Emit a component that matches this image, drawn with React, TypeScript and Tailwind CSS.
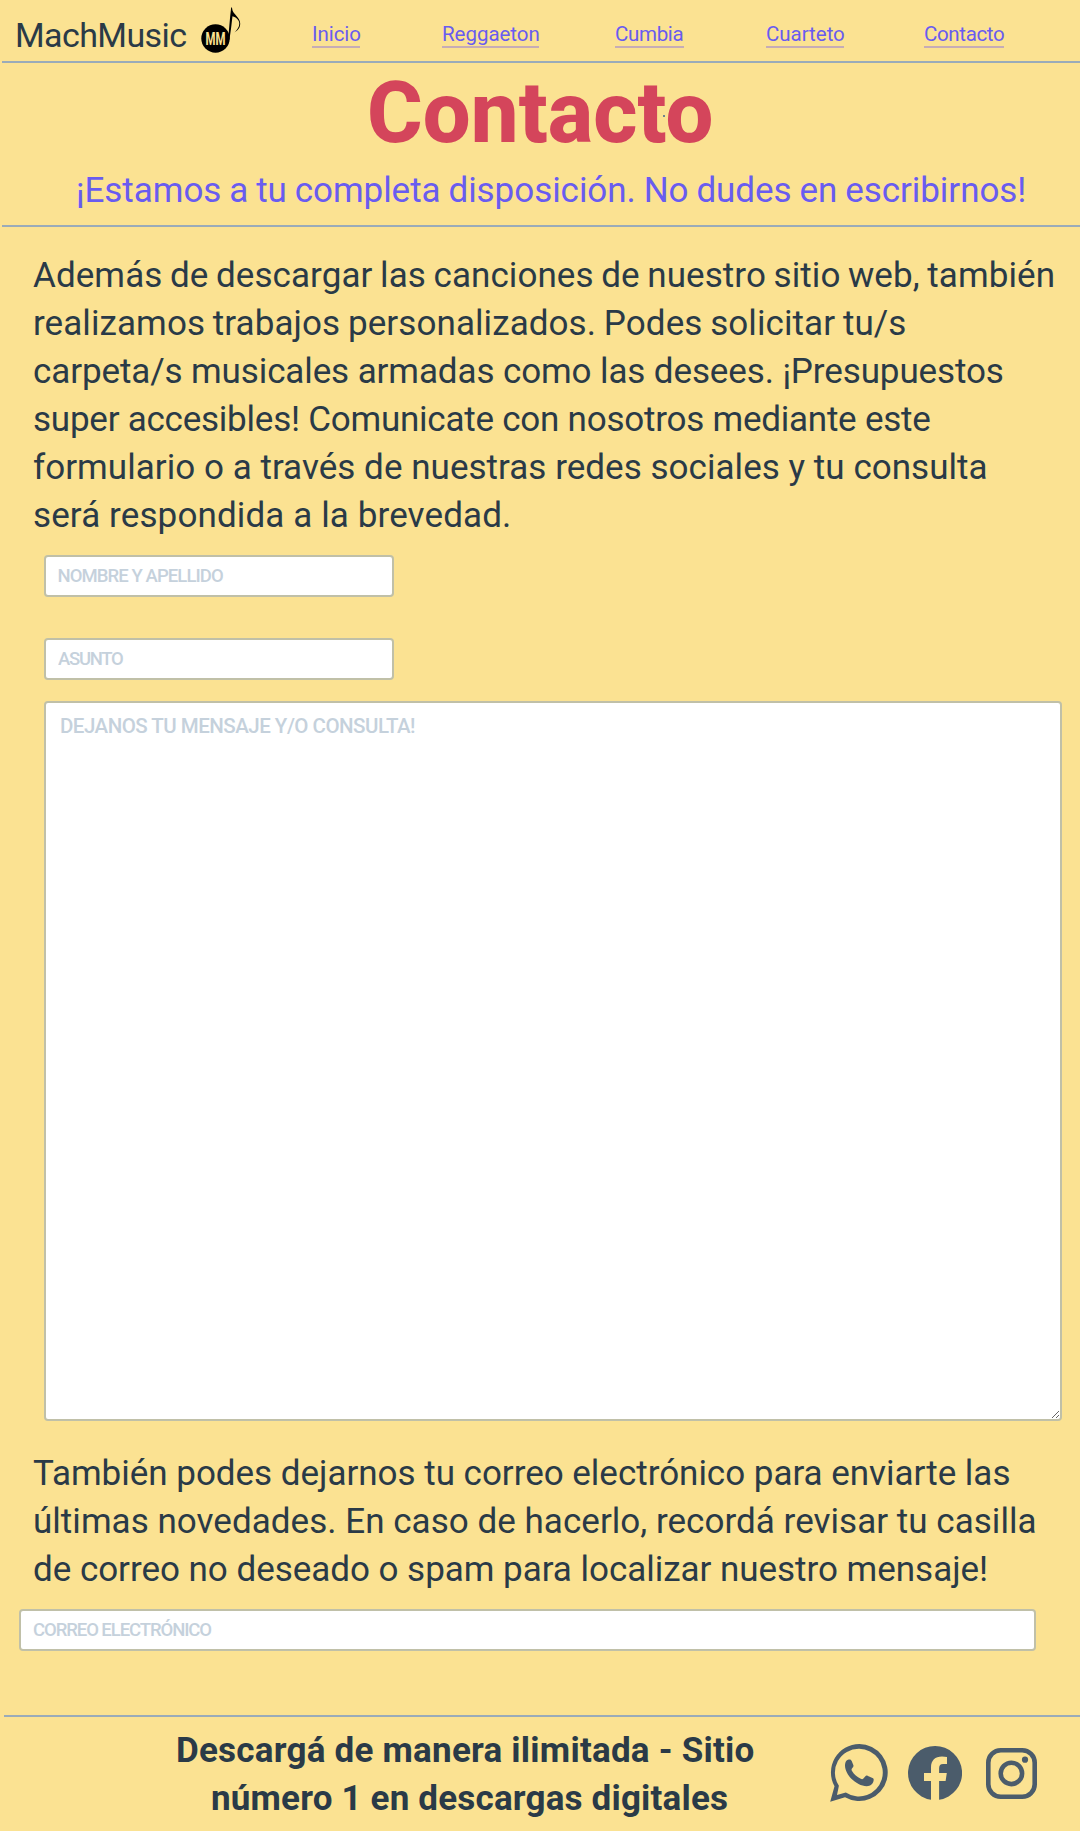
import React from "react";

type Line = { text: string; className: string };

const links: Line[] = [
  { text: "Inicio", className: "ml-[69px] w-[48px] tracking-[-0.08px]" },
  { text: "Reggaeton", className: "ml-[82px] w-[97px] tracking-[-0.03px]" },
  { text: "Cumbia", className: "ml-[76px] w-[69px] tracking-[-0.32px]" },
  { text: "Cuarteto", className: "ml-[82px] w-[78px] tracking-[-0.03px]" },
  { text: "Contacto", className: "ml-[80px] w-[80px] tracking-[-0.35px]" },
];

const intro: Line[] = [
  { text: "Además de descargar las canciones de nuestro sitio web, también", className: "-ml-px tracking-[0.08px] [word-spacing:-1.2px]" },
  { text: "realizamos trabajos personalizados. Podes solicitar tu/s", className: "-ml-px tracking-[0.08px] [word-spacing:-1px]" },
  { text: "carpeta/s musicales armadas como las desees. ¡Presupuestos", className: "-ml-px tracking-[-0.11px]" },
  { text: "super accesibles! Comunicate con nosotros mediante este", className: "-ml-px tracking-[-0.235px]" },
  { text: "formulario o a través de nuestras redes sociales y tu consulta", className: "-ml-px tracking-[0.035px]" },
  { text: "será respondida a la brevedad.", className: "-ml-px tracking-[0.117px]" },
];

const newsletter: Line[] = [
  { text: "También podes dejarnos tu correo electrónico para enviarte las", className: "-ml-px tracking-[-0.02px]" },
  { text: "últimas novedades. En caso de hacerlo, recordá revisar tu casilla", className: "-ml-px tracking-[0.033px]" },
  { text: "de correo no deseado o spam para localizar nuestro mensaje!", className: "-ml-px tracking-[-0.031px]" },
];

const inputBase =
  "block h-[42px] rounded-[4px] border-2 border-[#c0c0a8] bg-white pb-px font-medium text-[18.5px] placeholder:text-[#c5d1dc] placeholder:opacity-100 outline-none";

function Paragraph({ lines }: { lines: Line[] }) {
  return (
    <p className="pl-[34px] text-[35px] leading-[48px]">
      {lines.map((l) => (
        <span key={l.text} className={`block whitespace-nowrap ${l.className}`}>
          {l.text}
        </span>
      ))}
    </p>
  );
}

function NoteLogo() {
  return (
    <svg className="block h-[48px] w-[42px]" viewBox="0 0 42 48" aria-hidden="true">
      <circle cx="14.5" cy="32.5" r="14.2" fill="#000" />
      <path
        d="M30.2 1.3c.7 0 1 .7 1 1.8.3 5 8 8.2 8 14.5 0 4.2-2.3 6.9-5.7 8.9 3-3 4.8-5.5 4.8-8.9 0-3.7-3.2-6.5-6.8-7.4-.8 5.8-1.4 14-3.2 23.8h-1.4c1.5-11 1.8-21.7 3.3-32.7z"
        fill="#000"
      />
      <text
        x="4.6"
        y="39.2"
        textLength="20"
        lengthAdjust="spacingAndGlyphs"
        fill="#fbe292"
        className="font-['Roboto'] text-[19px] font-bold"
      >
        MM
      </text>
    </svg>
  );
}

function WhatsappIcon() {
  return (
    <svg className="block h-[58px] w-[58px]" viewBox="0 0 58 58" fill="#4b5c6b" aria-label="WhatsApp">
      <path
        fillRule="evenodd"
        d="M29.3 0A28.5 28.5 0 1 1 15 53.2L.2 57.7 4.5 42.3A28.5 28.5 0 0 1 29.3 0zM29.3 4.7A23.9 23.9 0 0 0 8.9 41.8L7 50.9 15.8 48.6A23.9 23.9 0 1 0 29.3 4.7z"
      />
      <path d="M15.2 19.5c.4-2.2 1.6-3.7 3.5-4 1.7-.3 2.5.2 3 1.5l1.7 4.3c.4 1.2-.6 2.3-1.4 3.3-.7.8-.5 1.5 0 2.3 2.1 3.4 5 6 8.8 7.9 1.2.6 1.8.5 2.6-.4l2-2.2c.7-.8 1.5-.8 2.5-.3l4.6 2.2c1.2.5 1.3 1.2 1.1 2.5-.5 3.2-2.9 5.6-6.9 5.6-5.3 0-11.2-3.3-15.6-7.7-3.5-3.6-7-9.600-5.900-15z" />
    </svg>
  );
}

function FacebookIcon() {
  return (
    <svg className="block h-[54px] w-[54px]" viewBox="0 0 54 54" fill="#4b5c6b" aria-label="Facebook">
      <path d="M27 0a27 27 0 0 1 4.1 53.7V35h6.5l1.2-8h-7.7v-4.7c0-2.7 1.2-4.2 4-4.2h3.9v-7.2c-1.5-.3-3.2-.5-5-.5-6.9 0-11 3.9-11 11V27h-7v8h7v18.7A27 27 0 0 1 27 0z" />
    </svg>
  );
}

function InstagramIcon() {
  return (
    <svg className="block h-[51px] w-[51px]" viewBox="0 0 51 51" fill="none" stroke="#4b5c6b" aria-label="Instagram">
      <rect x="2.3" y="2.3" width="46.4" height="46.4" rx="12.5" strokeWidth="4.6" />
      <circle cx="25.4" cy="25.4" r="10.7" strokeWidth="4.6" />
      <circle cx="39" cy="11.7" r="3.1" fill="#4b5c6b" stroke="none" />
    </svg>
  );
}

export default function App() {
  return (
    <div className="h-[1831px] w-[1080px] overflow-hidden bg-[#fbe292] font-['Roboto',sans-serif] text-[#2a3a47]">
      <header className="ml-[2px] flex h-[63px] items-start border-b-2 border-[#9aabb9]">
        <span className="ml-[13px] mt-[11px] w-[184px] whitespace-nowrap text-[34px] leading-[48px] tracking-[-0.6px]">
          MachMusic
        </span>
        <span className="ml-[2px] mt-[6px]">
          <NoteLogo />
        </span>
        <nav className="flex pt-[19px]">
          {links.map((l) => (
            <a
              key={l.text}
              href="#"
              className={`block h-[29px] whitespace-nowrap border-b-2 border-[#c6acb6] text-[20.5px] leading-[30px] text-[#695cf0] ${l.className}`}
            >
              {l.text}
            </a>
          ))}
        </nav>
      </header>

      <section className="ml-[2px] h-[164px] border-b-2 border-[#9aabb9]">
        <h1 className="relative h-[104px] whitespace-nowrap pl-[365px] text-[85px] font-extrabold leading-[100px] tracking-[0.1px] text-[#d4455b]">
          Contacto
          <span className="absolute left-[661px] top-[52px] h-[2px] w-[2px] bg-[#6f8590]" />
        </h1>
        <p className="whitespace-nowrap pl-[74px] text-[35px] leading-[48px] tracking-[-0.05px] text-[#695cf0] [word-spacing:-0.7px]">
          ¡Estamos a tu completa disposición. No dudes en escribirnos!
        </p>
      </section>

      <main className="h-[1488px] pt-[25px]">
        <Paragraph lines={intro} />
        <form className="ml-[44px] pt-[15px]">
          <input
            className={`${inputBase} w-[350px] pl-[11.5px] tracking-[-0.915px]`}
            placeholder="NOMBRE Y APELLIDO"
          />
          <input
            className={`${inputBase} mt-[41px] w-[350px] pl-[12px] tracking-[-1.29px]`}
            placeholder="ASUNTO"
          />
          <textarea
            className="mt-[21px] block h-[720px] w-[1018px] resize rounded-[4px] border-2 border-[#c0c0a8] bg-white pl-[14px] pt-[8px] text-[20.5px] font-medium leading-[30px] tracking-[-0.51px] outline-none placeholder:text-[#c5d1dc] placeholder:opacity-100"
            placeholder="DEJANOS TU MENSAJE Y/O CONSULTA!"
          />
        </form>
        <div className="pt-[29px]">
          <Paragraph lines={newsletter} />
        </div>
        <input
          className={`${inputBase} ml-[19px] mt-[15px] w-[1017px] pl-[12px] tracking-[-1.08px]`}
          placeholder="CORREO ELECTRÓNICO"
        />
      </main>

      <footer className="ml-[4px] flex h-[116px] items-start border-t-2 border-[#9aabb9]">
        <p className="ml-[172px] mt-[10px] w-[582px] text-[35px] font-bold leading-[48px]">
          <span className="block whitespace-nowrap tracking-[0.227px]">Descargá de manera ilimitada - Sitio</span>
          <span className="block whitespace-nowrap pl-[35px] tracking-[0.18px]">número 1 en descargas digitales</span>
        </p>
        <div className="ml-[72px] flex">
          <a href="#" className="mt-[27px]">
            <WhatsappIcon />
          </a>
          <a href="#" className="ml-[20px] mt-[29px]">
            <FacebookIcon />
          </a>
          <a href="#" className="ml-[23.5px] mt-[30.5px]">
            <InstagramIcon />
          </a>
        </div>
      </footer>
    </div>
  );
}
